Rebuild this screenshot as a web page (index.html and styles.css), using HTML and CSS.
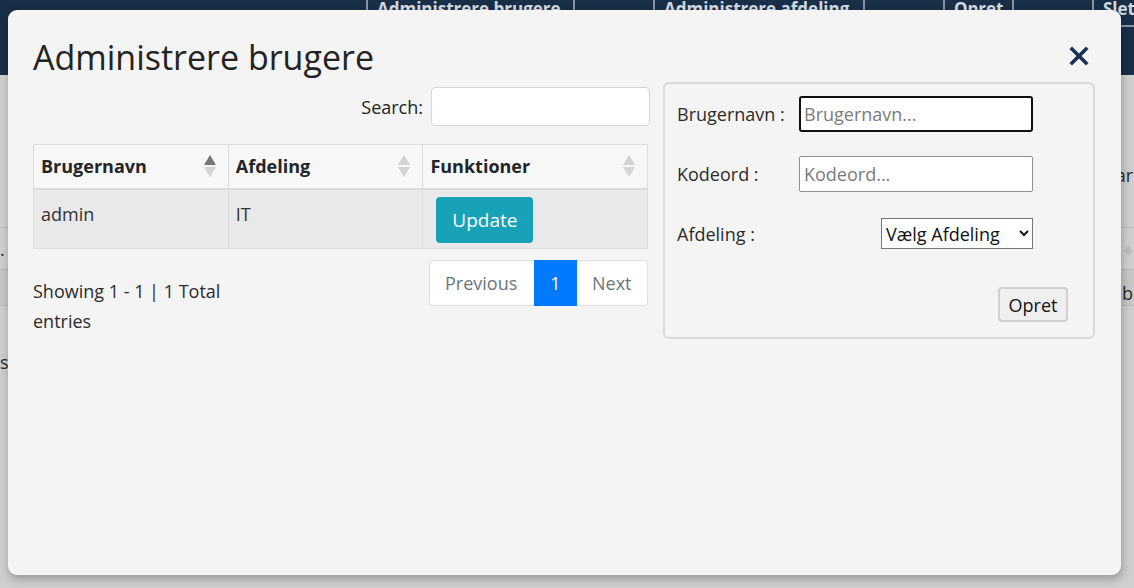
FILE: index.html
```html
<!DOCTYPE html>
<html lang="da">
<head>
<meta charset="utf-8">
<title>Administrere brugere</title>
<link rel="stylesheet" href="styles.css">
</head>
<body>
<header class="topbar">
  <nav class="topnav">
    <span class="navbox nav-w1">Administrere brugere</span>
    <span class="navbox navgap"></span>
    <span class="navbox nav-w2">Administrere afdeling</span>
    <span class="navbox navgap"></span>
    <span class="navbox nav-w3">Opret</span>
    <span class="navbox navgap"></span>
    <span class="navbox nav-w4">Slet</span>
  </nav>
</header>
<main class="bgpage">
  <div class="bgrow bgrow-a"><span class="bgtext-l"></span><span class="bgtext-r">ar</span></div>
  <div class="bgrow bgrow-b"><span class="bgtext-l">.</span><span class="bgtext-r dim">♦</span></div>
  <div class="bgrow bgrow-c"><span class="bgtext-l"></span><span class="bgtext-r">ab</span></div>
  <div class="bgrow bgrow-d"><span class="bgtext-l">s.</span></div>
</main>

<div class="modal">
  <div class="modal-header">
    <h1 class="modal-title">Administrere brugere</h1>
    <button class="close" aria-label="Luk">
      <svg width="20" height="20" viewBox="0 0 20 20"><path d="M3 3 L17 17 M17 3 L3 17" stroke="#1c3350" stroke-width="3.6" stroke-linecap="square"/></svg>
    </button>
  </div>
  <div class="modal-body">
    <section class="list-col">
      <div class="search-row">
        <label class="search-label">Search:</label>
        <input class="search-input" type="text">
      </div>
      <table class="users">
        <thead>
          <tr>
            <th><div class="th-inner">Brugernavn<span class="sort"><i class="up active"></i><i class="down"></i></span></div></th>
            <th><div class="th-inner">Afdeling<span class="sort"><i class="up"></i><i class="down"></i></span></div></th>
            <th><div class="th-inner">Funktioner<span class="sort"><i class="up"></i><i class="down"></i></span></div></th>
          </tr>
        </thead>
        <tbody>
          <tr>
            <td>admin</td>
            <td>IT</td>
            <td><button class="btn-update">Update</button></td>
          </tr>
        </tbody>
      </table>
      <div class="list-footer">
        <p class="info">Showing 1 - 1 | 1 Total entries</p>
        <ul class="pager">
          <li class="page">Previous</li>
          <li class="page current">1</li>
          <li class="page">Next</li>
        </ul>
      </div>
    </section>
    <section class="form-panel">
      <div class="form-row">
        <label class="form-label">Brugernavn :</label>
        <input class="form-input focused" type="text" placeholder="Brugernavn...">
      </div>
      <div class="form-row">
        <label class="form-label">Kodeord :</label>
        <input class="form-input" type="password" placeholder="Kodeord...">
      </div>
      <div class="form-row">
        <label class="form-label">Afdeling :</label>
        <select class="form-select"><option>Vælg Afdeling</option></select>
      </div>
      <div class="form-actions">
        <button class="btn-opret">Opret</button>
      </div>
    </section>
  </div>
</div>
</body>
</html>
```

FILE: styles.css
```css
* { box-sizing: border-box; }
html, body { margin: 0; padding: 0; }
body {
  width: 1134px;
  height: 588px;
  overflow: hidden;
  background: #cfcfcf;
  font-family: "Open Sans", "Noto Sans", sans-serif;
  color: #212529;
  position: relative;
}

.topbar {
  display: flex;
  height: 75px;
  background: #192f47;
  overflow: hidden;
}
.topnav {
  display: flex;
  padding-left: 366px;
  margin-top: -6px;
  align-self: flex-start;
}
.navbox {
  flex: none;
  height: 33px;
  border: 2px solid #8793a2;
  border-top: none;
  color: #d3d9e0;
  font-weight: 700;
  font-size: 17px;
  line-height: 30px;
  padding: 0 9px;
  white-space: nowrap;
  overflow: hidden;
}
.nav-w1 { width: 209px; }
.nav-w2 { width: 212px; }
.nav-w3 { width: 71px; }
.nav-w4 { width: 60px; }
.navgap { width: 78px; border-left: none; border-right: none; }
.bgpage {
  font-size: 18px;
  color: #2a2a2a;
}
.bgrow {
  display: flex;
  justify-content: space-between;
  align-items: center;
}
.bgrow-a { height: 153px; border-bottom: 1px solid #b9b9b9; align-items: flex-end; padding-bottom: 40px; }
.bgrow-b { height: 42px; border-bottom: 1px solid #b9b9b9; }
.bgrow-c { height: 36px; border-bottom: 1px solid #bcbcbc; background: #c7c7c7; align-items: flex-end; }
.bgrow-d { height: 68px; align-items: flex-end; }
.bgtext-r { margin-right: 1px; }
.bgtext-r.dim { color: #bdbdbd; }
.bgtext-l { margin-left: 0; }

/* modal */
.modal {
  position: absolute;
  left: 8px;
  top: 10px;
  width: 1113px;
  height: 565px;
  background: #f4f4f4;
  border-radius: 9px;
  box-shadow: 1px 4px 10px rgba(0,0,0,0.28);
  padding: 0 26px 0 25px;
}
.modal-header {
  display: flex;
  justify-content: space-between;
  align-items: center;
  padding-top: 22px;
  height: 72px;
}
.modal-title {
  margin: 0;
  font-weight: 400;
  font-size: 34px;
  line-height: 44px;
  color: #222;
}
.close {
  border: none;
  background: none;
  padding: 0;
  margin-right: 6px;
  width: 20px;
  height: 20px;
  margin-top: -3px;
}
.close svg { display: block; }

.modal-body {
  display: flex;
  gap: 13px;
  align-items: flex-start;
}
.list-col {
  width: 617px;
  padding-top: 5px;
}
.search-row {
  display: flex;
  justify-content: flex-end;
  align-items: center;
  gap: 8px;
}
.search-label { font-size: 18px; color: #222; }
.search-input {
  width: 219px;
  height: 39px;
  border: 1px solid #d6d6d6;
  border-radius: 4px;
  background: #fff;
}
.users {
  margin-top: 18px;
  width: 615px;
  border-collapse: collapse;
  font-size: 18px;
}
.users th, .users td {
  border: 1px solid #dcdcdc;
  text-align: left;
}
.users th {
  height: 44px;
  background: #f7f7f7;
  border-bottom: 2px solid #dcdcdc;
  padding: 0 7px;
  font-weight: 700;
  width: 195px;
}
.users th:last-child { width: 225px; }
.th-inner {
  display: flex;
  justify-content: space-between;
  align-items: center;
}
.sort {
  display: flex;
  flex-direction: column;
  gap: 2px;
  margin-right: 5px;
}
.sort i {
  display: block;
  width: 0;
  height: 0;
  border-left: 6px solid transparent;
  border-right: 6px solid transparent;
}
.sort .up { border-bottom: 10px solid #d3d3d3; }
.sort .down { border-top: 10px solid #d3d3d3; }
.sort .up.active { border-bottom-color: #777; }
.users tbody tr { background: #e9e9e9; }
.users td {
  height: 60px;
  vertical-align: top;
  padding: 12px 7px 0;
  color: #333;
}
.users td:last-child { padding: 7px 13px 0; }
.btn-update {
  font-family: inherit;
  font-size: 19px;
  color: #fff;
  background: #17a2b8;
  border: none;
  border-radius: 4px;
  width: 97px;
  height: 46px;
  padding: 0;
}
.list-footer {
  display: flex;
  justify-content: space-between;
  align-items: flex-start;
  margin-top: 11px;
}
.info {
  margin: 16px 0 0;
  width: 235px;
  font-size: 18px;
  line-height: 30px;
  color: #2b2b2b;
}
.pager {
  display: flex;
  list-style: none;
  margin: 0 2px 0 0;
  padding: 0;
}
.page {
  height: 46px;
  line-height: 44px;
  font-size: 18px;
  color: #6c757d;
  background: #fff;
  border: 1px solid #dee2e6;
  padding: 0 15px;
}
.page:first-child { border-radius: 4px 0 0 4px; width: 105px; border-right: none; }
.page:last-child { border-radius: 0 4px 4px 0; width: 71px; border-left: none; }
.page.current { background: #007bff; color: #fff; border-color: #007bff; width: 43px; text-align: center; padding: 0; }

.form-panel {
  width: 432px;
  border: 2px solid #d9d9d9;
  border-radius: 6px;
  padding: 12px 25px 15px 12px;
  height: 257px;
}
.form-row {
  display: flex;
  justify-content: space-between;
  align-items: center;
  height: 35px;
  margin-bottom: 25px;
}
.form-label { font-size: 18px; color: #2b2b2b; }
.form-input {
  width: 234px;
  height: 36px;
  border: 1px solid #8f8f8f;
  border-radius: 2px;
  background: #fff;
  font-family: inherit;
  font-size: 18px;
  padding: 0 4px;
  margin-right: 35px;
}
.form-input::placeholder { color: #7b7b7b; }
.form-input.focused { border: 2px solid #101010; border-radius: 3px; padding: 0 3px; }
.form-select {
  width: 152px;
  height: 31px;
  font-family: inherit;
  font-size: 18px;
  border: 1px solid #767676;
  border-radius: 0;
  background: #fff;
  color: #111;
  margin-right: 35px;
}
.form-actions {
  display: flex;
  justify-content: flex-end;
  margin-top: 36px;
}
.btn-opret {
  font-family: inherit;
  font-size: 18px;
  color: #111;
  background: #efefef;
  border: 2px solid #d0d0d0;
  border-radius: 4px;
  width: 70px;
  height: 35px;
  padding: 0;
}
```
